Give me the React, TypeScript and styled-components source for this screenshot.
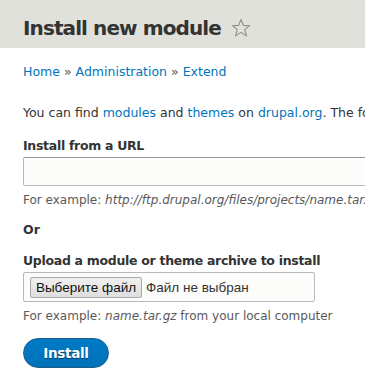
import React from "react";
import styled, { createGlobalStyle } from "styled-components";

const GlobalStyle = createGlobalStyle`
  html, body {
    margin: 0;
    padding: 0;
    background: #ffffff;
    overflow: hidden;
  }
  body {
    font-family: "DejaVu Sans", "Lucida Grande", Verdana, sans-serif;
    color: #333;
    font-size: 13px;
  }
`;

const Header = styled.header`
  background: #e1e1db;
  height: 48px;
  display: flex;
  align-items: center;
  padding: 8px 23px 0;
  box-sizing: border-box;
`;

const Title = styled.h1`
  margin: 0;
  font-size: 20px;
  font-weight: bold;
  color: #333;
  letter-spacing: -0.9px;
  display: flex;
  align-items: center;
  gap: 10px;
  white-space: nowrap;
`;

const Content = styled.main`
  padding: 0 0 0 23px;
  overflow: hidden;
`;

const Breadcrumb = styled.nav`
  margin-top: 16px;
  font-size: 12.5px;
  color: #333;
  white-space: nowrap;
`;

const Link = styled.a`
  color: #0074bd;
  text-decoration: none;
`;

const Sep = styled.span`
  color: #555;
  margin: 0 4px;
`;

const Intro = styled.p`
  margin: 26px 0 0;
  white-space: nowrap;
  font-size: 12.5px;
`;

const Field = styled.div<{ $top: number }>`
  margin-top: ${(p) => p.$top}px;
`;

const Label = styled.div`
  font-weight: bold;
  font-size: 12.5px;
  letter-spacing: -0.3px;
  margin-bottom: 4px;
`;

const TextInput = styled.div`
  width: 400px;
  height: 29px;
  box-sizing: border-box;
  border: 1px solid #b8b8b8;
  border-top-color: #999;
  border-radius: 2px;
  background: #fcfcfa;
`;

const Description = styled.div`
  margin-top: 7px;
  font-size: 12px;
  color: #595959;
  white-space: nowrap;
`;

const FileBox = styled.div`
  width: 292px;
  height: 30px;
  box-sizing: border-box;
  border: 1px solid #b8b8b8;
  border-radius: 2px;
  background: #fcfcfa;
  display: flex;
  align-items: center;
  padding-left: 6px;
  gap: 4px;
  font-family: "Liberation Sans", Arial, sans-serif;
  font-size: 13.5px;
  color: #333;
`;

const FileButton = styled.button`
  height: 21px;
  width: 112px;
  box-sizing: border-box;
  border: 1px solid #a9a9a9;
  border-radius: 2px;
  background: linear-gradient(#f0f0f0, #dedede);
  font-family: "Liberation Sans", Arial, sans-serif;
  font-size: 13.5px;
  color: #111;
  padding: 0;
`;

const Or = styled.div`
  font-weight: bold;
  font-size: 12.5px;
  margin-top: 15px;
`;

const InstallButton = styled.button`
  margin-top: 15px;
  width: 86px;
  height: 30px;
  border-radius: 20px;
  border: 1px solid #1e5c90;
  background: linear-gradient(#007bc6, #0071b8);
  color: #fff;
  font-family: "DejaVu Sans", sans-serif;
  font-weight: bold;
  font-size: 13.5px;
  letter-spacing: -0.3px;
  text-shadow: 0 1px 1px rgba(0, 0, 0, 0.5);
  padding: 0;
`;

const Star = () => (
  <svg width="20" height="20" viewBox="0 0 20 20">
    <path
      d="M10 1.5 L12.4 7.4 L18.6 7.7 L13.8 11.7 L15.4 17.9 L10 14.4 L4.6 17.9 L6.2 11.7 L1.4 7.7 L7.6 7.4 Z"
      fill="none"
      stroke="#8e8e80"
      strokeWidth="1.1"
      strokeLinejoin="round"
    />
  </svg>
);

export default function App() {
  return (
    <>
      <GlobalStyle />
      <Header>
        <Title>
          Install new module <Star />
        </Title>
      </Header>
      <Content>
        <Breadcrumb>
          <Link href="#">Home</Link>
          <Sep>»</Sep>
          <Link href="#">Administration</Link>
          <Sep>»</Sep>
          <Link href="#">Extend</Link>
        </Breadcrumb>
        <Intro>
          You can find <Link href="#">modules</Link> and <Link href="#">themes</Link> on{" "}
          <Link href="#">drupal.org</Link>. The following file extensions are supported
        </Intro>
        <Field $top={18}>
          <Label>Install from a URL</Label>
          <TextInput />
          <Description>
            For example: <em>http://ftp.drupal.org/files/projects/name.tar.gz</em>
          </Description>
        </Field>
        <Or>Or</Or>
        <Field $top={16}>
          <Label>Upload a module or theme archive to install</Label>
          <FileBox>
            <FileButton>Выберите файл</FileButton>
            Файл не выбран
          </FileBox>
          <Description>
            For example: <em>name.tar.gz</em> from your local computer
          </Description>
        </Field>
        <InstallButton>Install</InstallButton>
      </Content>
    </>
  );
}
